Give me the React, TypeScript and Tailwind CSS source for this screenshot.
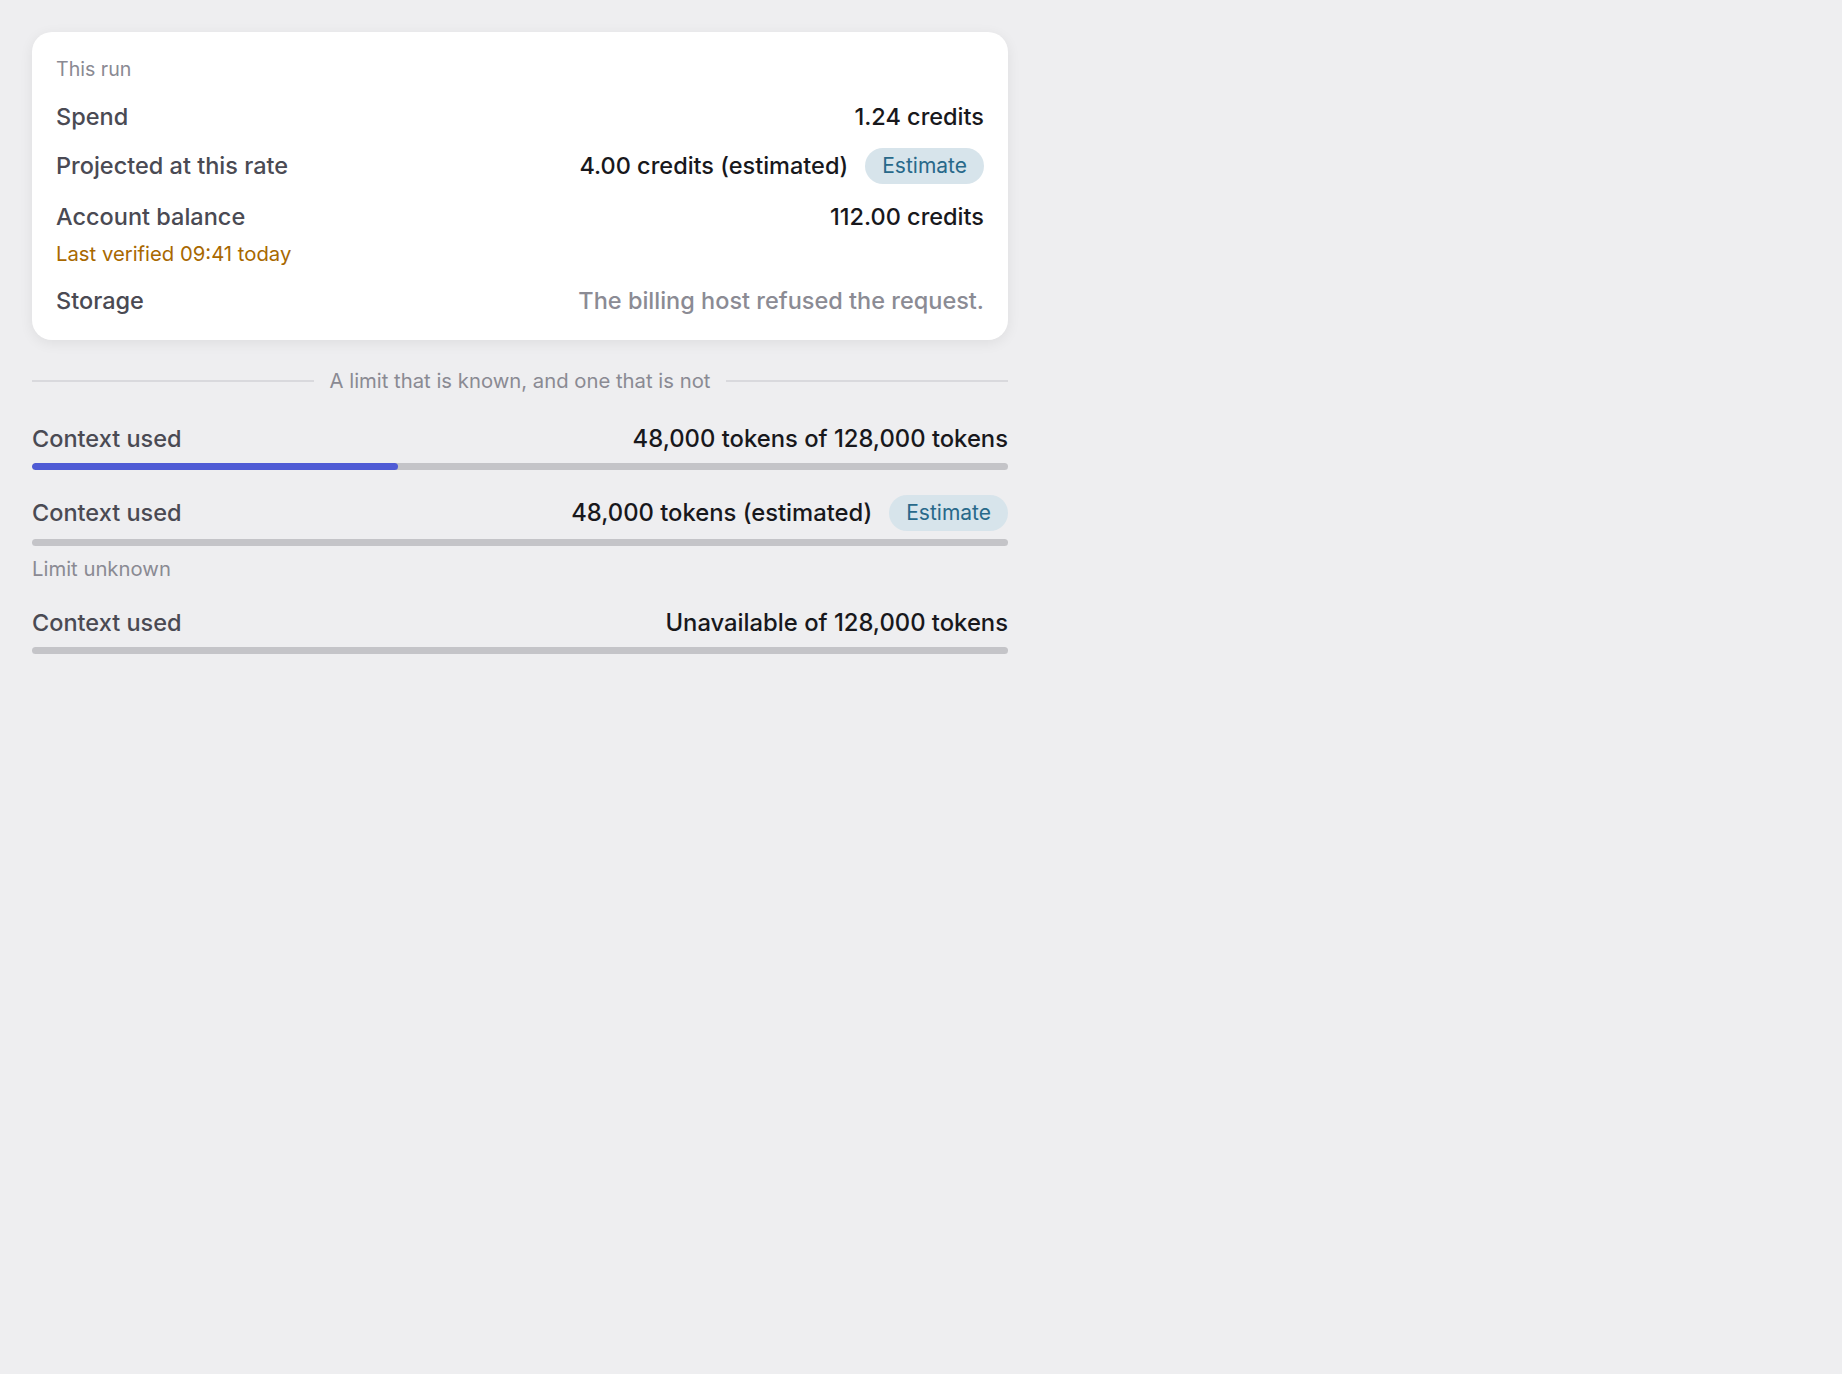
const font = { fontFamily: "Inter, 'Noto Sans', sans-serif" };

const Pill = () => (
  <span className="inline-flex h-[36px] items-center rounded-full bg-[#d7e4eb] px-[17px] text-[21px] text-[#28698a]">
    Estimate
  </span>
);

const Row = ({ label, children, className = "" }: { label: string; children: React.ReactNode; className?: string }) => (
  <div className={`flex items-center justify-between ${className}`}>
    <span className="text-[23.5px] leading-[32px] font-medium text-[#4a4a53]">{label}</span>
    <div className="flex items-center gap-[17px]">{children}</div>
  </div>
);

const Meter = ({
  label,
  value,
  pct,
  estimate,
  note,
}: {
  label: string;
  value: string;
  pct?: number;
  estimate?: boolean;
  note?: string;
}) => (
  <div className="flex flex-col">
    <Row label={label}>
      <span className="text-[23.8px] leading-[32px] font-medium text-[#18181c]">{value}</span>
      {estimate && <Pill />}
    </Row>
    <div className="mt-[8px] h-[7px] w-full overflow-hidden rounded-full bg-[#c4c4c8]">
      {pct !== undefined && <div className="h-full rounded-full bg-[#4f5bd5]" style={{ width: `${pct}%` }} />}
    </div>
    {note && <div className="mt-[10px] text-[20.3px] leading-[26px] text-[#8a8a93]">{note}</div>}
  </div>
);

export default function App() {
  return (
    <div className="min-h-screen bg-[#eeeef0] p-[32px]" style={font}>
      <div className="flex w-[976px] flex-col">
        <section className="rounded-[20px] bg-white px-[24px] pt-[24px] pb-[23px] shadow-[0_3px_14px_rgba(0,0,0,0.07)]">
          <div className="text-[19.6px] leading-[26px] text-[#8a8a93]">This run</div>
          <Row label="Spend" className="mt-[19px]">
            <span className="text-[23.5px] leading-[32px] font-medium text-[#18181c]">1.24 credits</span>
          </Row>
          <Row label="Projected at this rate" className="mt-[15px]">
            <span className="text-[23.5px] leading-[32px] font-medium text-[#18181c]">4.00 credits (estimated)</span>
            <Pill />
          </Row>
          <Row label="Account balance" className="mt-[17px]">
            <span className="text-[23.5px] leading-[32px] font-medium text-[#18181c]">112.00 credits</span>
          </Row>
          <div className="mt-[8px] text-[20.3px] leading-[26px] text-[#a86800]">Last verified 09:41 today</div>
          <Row label="Storage" className="mt-[18px]">
            <span className="text-[23.5px] leading-[32px] font-medium text-[#8b8b94]">The billing host refused the request.</span>
          </Row>
        </section>

        <div className="mt-[28px] flex items-center gap-[16px]">
          <div className="h-[2px] flex-1 bg-[#d9d9dd]" />
          <span className="text-[20.3px] leading-[26px] text-[#8a8a93]">A limit that is known, and one that is not</span>
          <div className="h-[2px] flex-1 bg-[#d9d9dd]" />
        </div>

        <div className="mt-[29px] flex flex-col gap-[25px]">
          <Meter label="Context used" value="48,000 tokens of 128,000 tokens" pct={37.5} />
          <Meter label="Context used" value="48,000 tokens (estimated)" estimate note="Limit unknown" />
          <Meter label="Context used" value="Unavailable of 128,000 tokens" />
        </div>
      </div>
    </div>
  );
}
